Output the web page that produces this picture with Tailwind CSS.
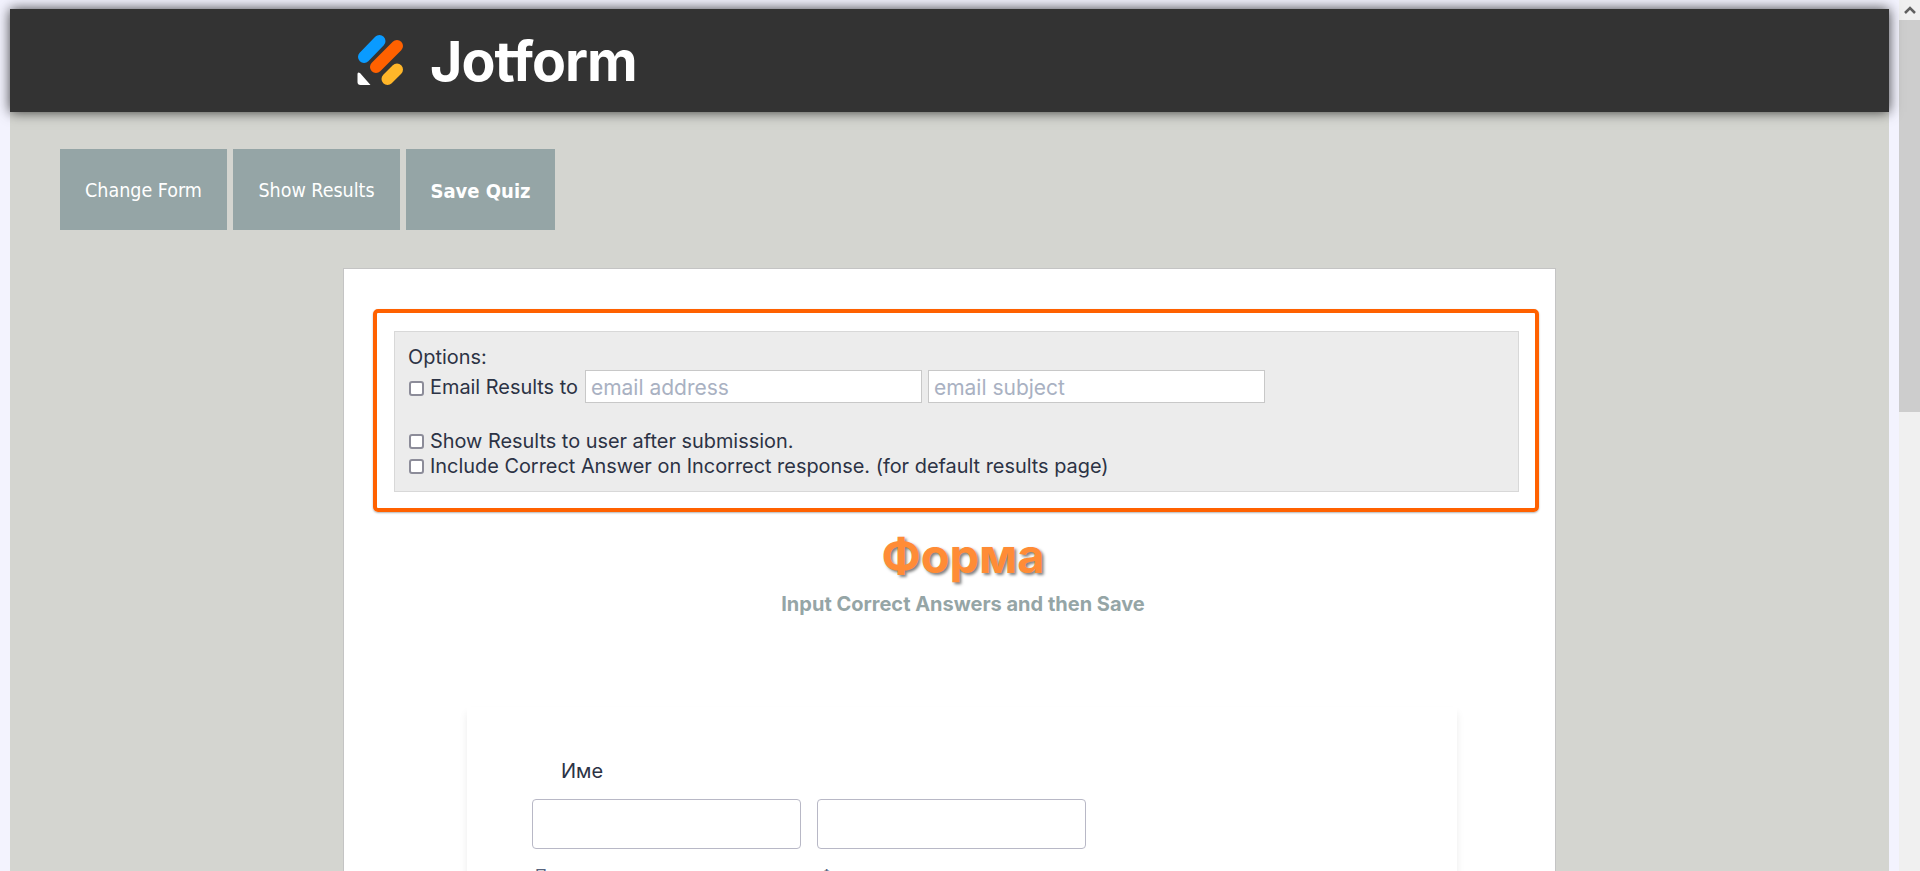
<!DOCTYPE html>
<html lang="en">
<head>
  <meta charset="UTF-8">
  <title>Jotform Quiz</title>
  <script src="https://cdn.jsdelivr.net/npm/@tailwindcss/browser@4"></script>
</head>
<body class="bg-[#f3f3fe] h-[871px] overflow-hidden font-['Inter',sans-serif] text-[#2c3345]">
  <div class="flex h-[871px]">
    <!-- page -->
    <div class="w-[1879px] ml-[10px] h-[871px] shrink-0">
      <header class="mt-[9px] h-[103px] bg-[#333333] shadow-[0_0_12px_rgba(0,0,0,0.75)] relative flex items-center pl-[330px]">
        <svg width="70" height="60" viewBox="340 30 70 60" class="shrink-0">
          <line x1="364" y1="56" x2="379.5" y2="40" stroke="#0a9bff" stroke-width="12" stroke-linecap="round"/>
          <line x1="376" y1="66" x2="397" y2="45" stroke="#ff6100" stroke-width="12" stroke-linecap="round"/>
          <line x1="387.5" y1="78" x2="397" y2="68.5" stroke="#ffb629" stroke-width="12" stroke-linecap="round"/>
          <path d="M357.5 73 Q357.5 70.5 360 72 L370.5 84 L360.5 84 Q357.5 84 357.5 81 Z" fill="#ffffff"/>
        </svg>
        <span class="ml-[20px] text-[55.5px] font-bold text-white leading-none tracking-[-1px]">Jotform</span>
      </header>

      <main class="bg-[#d4d5d0] h-[759px]">
        <div class="flex gap-[6px] pl-[50px] pt-[37px]">
          <button class="w-[167px] h-[81px] pt-[2px] bg-[#95a5a6] text-white text-[19.5px] font-['DejaVu_Sans_Condensed','DejaVu_Sans',sans-serif]">Change Form</button>
          <button class="w-[167px] h-[81px] pt-[2px] bg-[#95a5a6] text-white text-[19.5px] font-['DejaVu_Sans_Condensed','DejaVu_Sans',sans-serif]">Show Results</button>
          <button class="w-[149px] h-[81px] pt-[2px] bg-[#95a5a6] text-white text-[20px] font-bold font-['DejaVu_Sans_Condensed','DejaVu_Sans',sans-serif]">Save Quiz</button>
        </div>

        <div class="ml-[333px] mt-[38px] w-[1213px] h-[700px] bg-white border border-[#c4c4c4] pt-[40px] pl-[29px]">
          <div class="w-[1166px] h-[203px] border-[4px] border-[#ff6100] rounded-[5px] shadow-[0_1px_2px_rgba(0,0,0,0.3)] pt-[18px] pl-[17px]">
            <div class="w-[1125px] h-[161px] bg-[#ececec] border border-[#d8d8d8] pt-[13px] pl-[14px] text-[19.9px] leading-[25px]">
              <div class="-ml-[1px]">Options:</div>
              <div class="flex items-center gap-[6px] h-[33px]">
                <span class="w-[15px] h-[15px] mt-[3px] border-2 border-[#8c8c99] rounded-[3px] bg-white shrink-0"></span>
                <span class="mt-[2px] mr-[1px]">Email Results to</span>
                <input class="w-[337px] h-[33px] bg-white border border-[#c8c8c8] pl-[5px] pr-[4px] pt-[1px] text-[21px] placeholder-[#a9b1c2]" placeholder="email address">
                <input class="w-[337px] h-[33px] bg-white border border-[#c8c8c8] pl-[5px] pr-[4px] pt-[1px] text-[21px] placeholder-[#a9b1c2]" placeholder="email subject">
              </div>
              <div class="flex items-center gap-[6px] h-[25px] mt-[26px]">
                <span class="w-[15px] h-[15px] border-2 border-[#8c8c99] rounded-[3px] bg-white shrink-0"></span>
                <span>Show Results to user after submission.</span>
              </div>
              <div class="flex items-center gap-[6px] h-[25px]">
                <span class="w-[15px] h-[15px] border-2 border-[#8c8c99] rounded-[3px] bg-white shrink-0"></span>
                <span>Include Correct Answer on Incorrect response. (for default results page)</span>
              </div>
            </div>
          </div>

          <div class="w-[1180px] text-center mt-[16px]">
            <h1 class="text-[47px] leading-[56px] font-bold text-[#ff8c36] [text-shadow:2px_2px_3px_rgba(0,0,0,0.5)]">Форма</h1>
            <p class="mt-[8px] text-[20px] leading-[24px] font-bold text-[#95a5a6]">Input Correct Answers and then Save</p>
          </div>

          <div class="ml-[94px] mt-[91px] w-[990px] h-[200px] bg-white shadow-[0_6px_8px_rgba(0,0,0,0.08)] pl-[65px] pt-[52px]">
            <div class="pl-[29px] text-[20px] leading-[24px]">Име</div>
            <div class="flex gap-[16px] mt-[16px]">
              <input class="w-[269px] h-[50px] border border-[#b8b8c6] rounded-[4px]">
              <input class="w-[269px] h-[50px] border border-[#b8b8c6] rounded-[4px]">
            </div>
            <div class="flex gap-[16px] mt-[16px] text-[16px] leading-[20px] text-[#57647e]">
              <span class="w-[269px] pl-[3px]">Първо</span>
              <span class="w-[269px] pl-[3px]">Фамилия</span>
            </div>
          </div>
        </div>
      </main>
    </div>

    <!-- scrollbar -->
    <div class="ml-[10px] w-[21px] h-[871px] bg-[#f0f0f0] flex flex-col shrink-0">
      <div class="h-[20px] flex items-center justify-center">
        <svg width="12" height="8" viewBox="0 0 12 8"><path d="M1 7 L6 2 L11 7" fill="none" stroke="#606060" stroke-width="2.5"/></svg>
      </div>
      <div class="h-[392px] bg-[#cdcdcd]"></div>
    </div>
  </div>
</body>
</html>
